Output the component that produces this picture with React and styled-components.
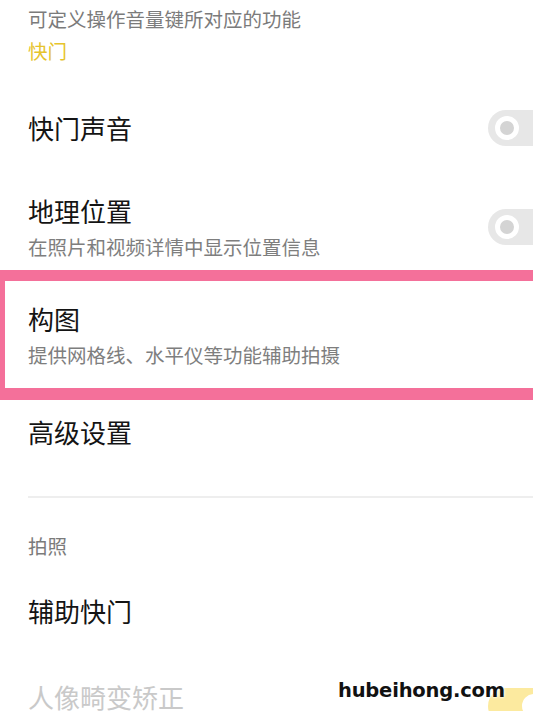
import React from 'react';
import styled, { createGlobalStyle } from 'styled-components';

const GlobalStyle = createGlobalStyle`
    html, body {
        margin: 0;
        padding: 0;
        background: #FFFFFF;
    }
    body {
        font-family: "Noto Sans CJK SC", "Noto Sans", sans-serif;
        -webkit-font-smoothing: antialiased;
    }
`

const Page = styled.div`
    position: relative;
    width: 533px;
    height: 711px;
    overflow: hidden;
    background: #FFFFFF;
`

const Header = styled.div`
    padding: 5px 28px 0;
`

const Desc = styled.p`
    margin: 0;
    font-size: 19.5px;
    line-height: 28px;
    color: #7b7b7b;
`

const Accent = styled.p`
    margin: 4px 0 0;
    font-size: 19.5px;
    line-height: 28px;
    color: #e6c42c;
`

const Row = styled.div`
    display: flex;
    align-items: ${({ top }) => top ? 'flex-start' : 'center'};
    justify-content: space-between;
    padding: ${({ pad }) => pad || '0'};
    padding-left: 28px;
    ${({ highlight }) => highlight && `
        border-top: 11px solid #f4709a;
        border-bottom: 12px solid #f4709a;
        border-left: 5px solid #f4709a;
        padding-left: 23px;
    `}
`

const Texts = styled.div`
    display: flex;
    flex-direction: column;
`

const Title = styled.span`
    font-size: 26px;
    line-height: ${({ tall }) => tall ? '80px' : '34px'};
    color: ${({ muted }) => muted ? '#c9c9c9' : '#141414'};
`

const Sub = styled.span`
    margin-top: 6px;
    font-size: 19.5px;
    line-height: 26px;
    color: #7e7e7e;
`

const Toggle = styled.div`
    flex: none;
    position: relative;
    width: 62px;
    height: 36px;
    margin-top: ${({ offset }) => offset || '0'};
    margin-right: -17px;
    border-radius: 18px;
    background: ${({ on }) => on ? '#fcea9f' : '#e7e7e7'};
`

const Knob = styled.div`
    position: absolute;
    top: 6px;
    left: ${({ on }) => on ? '34px' : '7px'};
    width: 14px;
    height: 14px;
    border-radius: 50%;
    border: 5px solid #FFFFFF;
    background: ${({ on }) => on ? '#FFFFFF' : '#d4d4d4'};
`

const Divider = styled.div`
    height: 2px;
    margin: 47px 0 0 28px;
    background: #eeeeee;
`

const Section = styled.p`
    margin: 34px 0 0 28px;
    font-size: 19.5px;
    line-height: 28px;
    color: #7b7b7b;
`

const Watermark = styled.span`
    position: absolute;
    left: 338px;
    top: 679px;
    font-family: "DejaVu Sans", sans-serif;
    font-weight: 900;
    font-size: 19.5px;
    letter-spacing: -0.2px;
    color: #111111;
    text-shadow: 0 0 3px #FFFFFF, 0 0 3px #FFFFFF;
`

export default function App() {
    return (
        <Page>
            <GlobalStyle />
            <Header>
                <Desc>可定义操作音量键所对应的功能</Desc>
                <Accent>快门</Accent>
            </Header>

            <Row pad="23px 0 0">
                <Title tall>快门声音</Title>
                <Toggle><Knob /></Toggle>
            </Row>

            <Row pad="26px 0 10px">
                <Texts>
                    <Title>地理位置</Title>
                    <Sub>在照片和视频详情中显示位置信息</Sub>
                </Texts>
                <Toggle><Knob /></Toggle>
            </Row>

            <Row highlight pad="21px 0 20px">
                <Texts>
                    <Title>构图</Title>
                    <Sub>提供网格线、水平仪等功能辅助拍摄</Sub>
                </Texts>
            </Row>

            <Row pad="15px 0 0">
                <Title>高级设置</Title>
            </Row>
            <Divider />

            <Section>拍照</Section>

            <Row pad="34px 0 0">
                <Title>辅助快门</Title>
            </Row>

            <Row top pad="52px 0 0">
                <Title muted>人像畸变矫正</Title>
                <Toggle on offset="8px"><Knob on /></Toggle>
            </Row>

            <Watermark>hubeihong.com</Watermark>
        </Page>
    );
}
